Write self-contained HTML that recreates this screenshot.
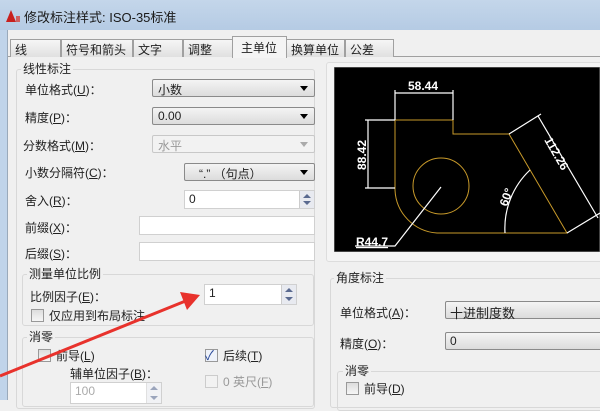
<!DOCTYPE html>
<html><head><meta charset="utf-8"><style>
*{box-sizing:border-box;margin:0;padding:0}
body{width:600px;height:400px;overflow:hidden;position:relative;background:#f0f0f0;font-family:"Liberation Sans","Noto Sans CJK SC",sans-serif;font-size:12px;color:#222}
.a{position:absolute;white-space:nowrap}
.title{left:0;top:0;width:600px;height:30px;background:linear-gradient(#c4d6ea,#b5cbe4)}
.tab{position:absolute;top:39px;height:18px;border:1px solid #a0a0a0;border-bottom:none;background:linear-gradient(#f6f6f6,#e0e0e0);padding:1px 0 0 4px;font-size:12px}
.grp{position:absolute;border:1px solid #d8d8d8;border-radius:3px}
.lbl{position:absolute;background:#f0f0f0;padding:0 2px;white-space:nowrap}
.cb{position:absolute;height:18px;border:1px solid #8a8a8a;border-radius:2px;background:linear-gradient(#f4f4f4,#dcdcdc);padding:1px 0 0 5px;font-size:12px}
.cb:after{content:"";position:absolute;right:6px;top:6px;border-left:4px solid transparent;border-right:4px solid transparent;border-top:5px solid #000}
.dis{border-color:#c8c8c8;color:#999;background:#f2f2f2}
.dis:after{border-top-color:#aaa}
.inp{position:absolute;height:19px;border:1px solid #d0d0d0;background:#fff;padding:1px 0 0 4px;font-size:12px}
.sp{position:absolute;right:0;top:0;width:15px;height:100%;background:#e8eaf0;border-left:1px solid #ccc}
.sp:before{content:"";position:absolute;left:3px;top:3px;border-left:4px solid transparent;border-right:4px solid transparent;border-bottom:4px solid #5a6a90}
.sp:after{content:"";position:absolute;left:3px;bottom:3px;border-left:4px solid transparent;border-right:4px solid transparent;border-top:4px solid #5a6a90}
.chk{position:absolute;width:13px;height:13px;border:1px solid #999;background:linear-gradient(#ddd,#f6f6f6)}
</style></head><body>
<div class="a title"></div>
<div class="a" style="left:0;top:30px;width:8px;height:370px;background:#c0d4ea;border-right:1px solid #9aaabb"></div>
<svg class="a" style="left:5px;top:9px" width="16" height="14"><polygon points="1,13 6,1 11,13" fill="#c8201e"/><rect x="11" y="7" width="4" height="6" fill="#d06060"/></svg>
<div class="a" style="left:24px;top:7px;font-size:13px;color:#1a1a1a">修改标注样式: ISO-35标准</div>
<div class="a" style="left:8px;top:56px;width:592px;height:1px;background:#a0a0a0"></div>
<div class="tab" style="left:10px;width:51px">线</div>
<div class="tab" style="left:61px;width:72px">符号和箭头</div>
<div class="tab" style="left:133px;width:50px">文字</div>
<div class="tab" style="left:183px;width:50px">调整</div>
<div class="tab" style="left:286px;width:59px">换算单位</div>
<div class="tab" style="left:345px;width:49px">公差</div>
<div class="tab" style="left:232px;top:36px;height:22px;width:55px;background:#f4f4f4;padding:2px 0 0 8px">主单位</div>

<div class="grp" style="left:16px;top:69px;width:299px;height:340px"></div>
<div class="lbl" style="left:21px;top:60px">线性标注</div>
<div class="a" style="left:25px;top:81px">单位格式(<u>U</u>)：</div>
<div class="cb" style="left:152px;top:79px;width:163px">小数</div>
<div class="a" style="left:25px;top:109px">精度(<u>P</u>)：</div>
<div class="cb" style="left:152px;top:107px;width:163px">0.00</div>
<div class="a" style="left:23px;top:137px">分数格式(<u>M</u>)：</div>
<div class="cb dis" style="left:152px;top:135px;width:163px">水平</div>
<div class="a" style="left:25px;top:164px">小数分隔符(<u>C</u>)：</div>
<div class="cb" style="left:184px;top:163px;width:131px;padding-left:14px">“.” （句点）</div>
<div class="a" style="left:25px;top:192px">舍入(<u>R</u>)：</div>
<div class="inp" style="left:184px;top:190px;width:131px">0<div class="sp"></div></div>
<div class="a" style="left:25px;top:219px">前缀(<u>X</u>)：</div>
<div class="inp" style="left:139px;top:216px;width:176px"></div>
<div class="a" style="left:25px;top:245px">后缀(<u>S</u>)：</div>
<div class="inp" style="left:139px;top:242px;width:176px"></div>

<div class="grp" style="left:22px;top:274px;width:292px;height:52px"></div>
<div class="lbl" style="left:27px;top:265px">测量单位比例</div>
<div class="a" style="left:30px;top:288px">比例因子(<u>E</u>)：</div>
<div class="inp" style="left:204px;top:284px;width:93px;height:21px">1<div class="sp"></div></div>
<div class="chk" style="left:31px;top:309px"></div>
<div class="a" style="left:49px;top:307px">仅应用到布局标注</div>

<div class="grp" style="left:22px;top:337px;width:292px;height:70px"></div>
<div class="lbl" style="left:27px;top:328px">消零</div>
<div class="chk" style="left:38px;top:349px"></div>
<div class="a" style="left:56px;top:347px">前导(<u>L</u>)</div>
<div class="chk" style="left:205px;top:349px;background:#eef2fa"></div>
<div class="a" style="left:205px;top:345px;color:#2a4a9a;font-size:13px">✓</div>
<div class="a" style="left:223px;top:347px">后续(<u>T</u>)</div>
<div class="a" style="left:70px;top:365px">辅单位因子(<u>B</u>)：</div>
<div class="chk" style="left:205px;top:375px;border-color:#ccc;background:#f2f2f2"></div>
<div class="a" style="left:223px;top:373px;color:#999">0 英尺(<u>F</u>)</div>
<div class="inp" style="left:70px;top:382px;width:92px;height:22px;color:#aaa">100<div class="sp" style="opacity:.6"></div></div>

<div class="grp" style="left:326px;top:62px;width:290px;height:200px;border-color:#ddd;background:#f4f4f4"></div>
<svg class="a" style="left:334px;top:67px" width="266" height="185" viewBox="334 67 266 185">
<rect x="334" y="67" width="266" height="185" fill="#000" stroke="#888"/>
<g fill="none" stroke="#c89a2a" stroke-width="1">
<path d="M395,120 H453 V134 H509 L567,233 H437 A45,45 0 0 1 395,190 Z"/>
<circle cx="441" cy="186" r="28"/>
</g>
<g fill="none" stroke="#fff" stroke-width="1.2">
<path d="M395,120 V90 M453,120 V90 M395,93 H453"/>
<path d="M395,120 H365 M395,188 H365 M368,120 V188"/>
<path d="M509,134 L541,114 M567,233 L600,213 M538,116 L598,218"/>
<path d="M505,233 A80,80 0 0 1 530,170"/>
<path d="M441,187 L395,246 H355"/>
</g>
<g fill="#fff" font-family="Liberation Sans,sans-serif" font-weight="bold" font-size="12">
<text x="408" y="90">58.44</text>
<text x="366" y="170" transform="rotate(-90 366 170)">88.42</text>
<text x="544" y="140" transform="rotate(60 544 140)">112.26</text>
<text x="507" y="207" transform="rotate(-70 507 207)" font-size="12">60°</text>
<text x="356" y="246" text-decoration="underline">R44.7</text>
</g>
</svg>

<div class="grp" style="left:330px;top:278px;width:290px;height:130px"></div>
<div class="lbl" style="left:334px;top:269px">角度标注</div>
<div class="a" style="left:340px;top:304px">单位格式(<u>A</u>)：</div>
<div class="cb" style="left:445px;top:301px;width:170px;padding-left:4px;font-size:13px">十进制度数</div>
<div class="a" style="left:340px;top:335px">精度(<u>O</u>)：</div>
<div class="cb" style="left:445px;top:332px;width:170px;padding-left:4px">0</div>
<div class="grp" style="left:337px;top:371px;width:280px;height:40px"></div>
<div class="lbl" style="left:343px;top:362px">消零</div>
<div class="chk" style="left:346px;top:382px"></div>
<div class="a" style="left:364px;top:380px">前导(<u>D</u>)</div>

<svg class="a" style="left:0;top:0" width="600" height="400">
<line x1="0" y1="376" x2="188" y2="300" stroke="#e8322c" stroke-width="3"/>
<polygon points="200,295 180,292 187,310" fill="#e8322c"/>
</svg>
</body></html>
